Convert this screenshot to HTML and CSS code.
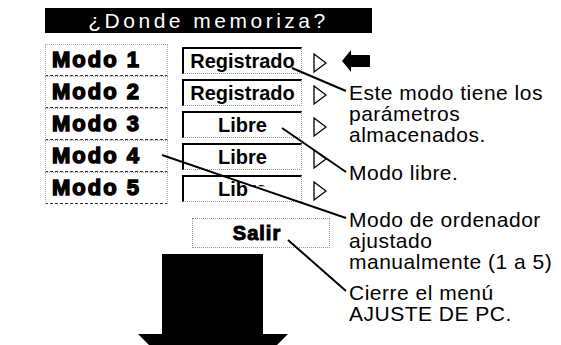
FILE: index.html
```html
<!DOCTYPE html>
<html>
	<head>
		<meta charset="utf-8">
		<link rel="stylesheet" href="styles.css">
		<title>¿Donde memoriza?</title>
	</head>
	<body>
		<main class="page">
			<h1 class="title">¿Donde memoriza?</h1>
			<div class="layout">
				<section class="menu">
					<ul class="modes">
						<li class="mode">
							<span class="mode-name">Modo 1</span>
							<span class="mode-state">Registrado</span>
							<svg class="tri" viewBox="0 0 14 20"><polygon points="1,1 13,10 1,19"/></svg>
						</li>
						<li class="mode">
							<span class="mode-name">Modo 2</span>
							<span class="mode-state">Registrado</span>
							<svg class="tri" viewBox="0 0 14 20"><polygon points="1,1 13,10 1,19"/></svg>
						</li>
						<li class="mode">
							<span class="mode-name">Modo 3</span>
							<span class="mode-state">Libre</span>
							<svg class="tri" viewBox="0 0 14 20"><polygon points="1,1 13,10 1,19"/></svg>
						</li>
						<li class="mode">
							<span class="mode-name">Modo 4</span>
							<span class="mode-state">Libre</span>
							<svg class="tri" viewBox="0 0 14 20"><polygon points="1,1 13,10 1,19"/></svg>
						</li>
						<li class="mode">
							<span class="mode-name">Modo 5</span>
							<span class="mode-state">Lib<span class="worn">re</span></span>
							<svg class="tri" viewBox="0 0 14 20"><polygon points="1,1 13,10 1,19"/></svg>
						</li>
					</ul>
					<div class="exit">Salir</div>
					<svg class="down-arrow" viewBox="0 0 150 91">
						<rect x="24" y="0" width="101" height="81"/>
						<polygon points="0,80 150,80 75,155"/>
					</svg>
				</section>
				<section class="notes">
					<svg class="pointer" viewBox="0 0 28 22"><polygon points="0,11 9,0 9,5 28,5 28,17 9,17 9,22"/></svg>
					<p class="note note-stored">Este modo tiene los<br>parámetros<br>almacenados.</p>
					<p class="note note-free">Modo libre.</p>
					<p class="note note-manual">Modo de ordenador<br>ajustado<br>manualmente (1 a 5)</p>
					<p class="note note-exit">Cierre el menú<br>AJUSTE DE PC.</p>
				</section>
			</div>
			<svg class="leaders" viewBox="0 0 561 345">
				<line x1="292" y1="68" x2="346" y2="91"/>
				<line x1="282" y1="128" x2="346" y2="172"/>
				<line x1="162" y1="155" x2="346" y2="218"/>
				<line x1="288" y1="240" x2="346" y2="291"/>
			</svg>
		</main>
	</body>
</html>
```

FILE: styles.css
```css
html, body{ margin: 0; overflow: hidden; background: #fff; }
.page{ position: relative; box-sizing: border-box; width: 561px; height: 345px; padding: 8px 0 0 45px; overflow: hidden; font-family: "Liberation Sans", Arial, sans-serif; color: #000; }

.title{ margin: 0; width: 327px; height: 25px; background: #000; color: #fff; font-size: 21px; font-weight: 400; line-height: 25px; letter-spacing: 3.5px; text-align: center; }

.layout{ display: flex; margin-top: 11px; }
.menu{ width: 285px; flex: none; }
.notes{ display: flex; flex-direction: column; align-items: flex-start; margin-left: 12px; }

.modes{ list-style: none; margin: 0; padding: 0; }
.mode{ display: flex; align-items: center; height: 32px; }
.mode-name{ box-sizing: border-box; width: 123px; height: 32px; padding-left: 6px; border: 1px dotted #aaa; border-bottom: 1px dashed #333; font-size: 22px; font-weight: 700; line-height: 30px; letter-spacing: 2px; -webkit-text-stroke: 1.4px #000; white-space: nowrap; }
.mode-state{ box-sizing: border-box; width: 120px; height: 27px; margin-left: 14px; border-top: 2px solid #000; border-left: 2px solid #000; border-right: 1px dotted #999; border-bottom: 1px dotted #999; font-size: 20px; font-weight: 700; line-height: 24px; text-align: center; }
.worn{ clip-path: inset(0 0 60% 0); }
.tri{ width: 14px; height: 20px; margin: 5px 0 0 11px; fill: none; stroke: #000; stroke-width: 1.3; }

.exit{ box-sizing: border-box; width: 138px; height: 30px; margin: 14px 0 0 147px; padding-right: 8px; border: 1px dotted #999; font-size: 20px; font-weight: 700; line-height: 28px; text-align: center; letter-spacing: 1px; -webkit-text-stroke: 1px #000; }
.down-arrow{ display: block; width: 150px; height: 91px; margin: 6px 0 0 93px; fill: #000; }

.pointer{ display: block; width: 28px; height: 22px; margin-top: 6px; fill: #000; }
.note{ margin: 0; padding-left: 7px; font-size: 21px; line-height: 21px; letter-spacing: 0.5px; white-space: nowrap; }
.note-stored{ margin-top: 10px; }
.note-free{ margin-top: 17px; }
.note-manual{ margin-top: 26px; }
.note-exit{ margin-top: 10px; }

.leaders{ position: absolute; top: 0; left: 0; width: 561px; height: 345px; pointer-events: none; stroke: #000; stroke-width: 2; }
```
